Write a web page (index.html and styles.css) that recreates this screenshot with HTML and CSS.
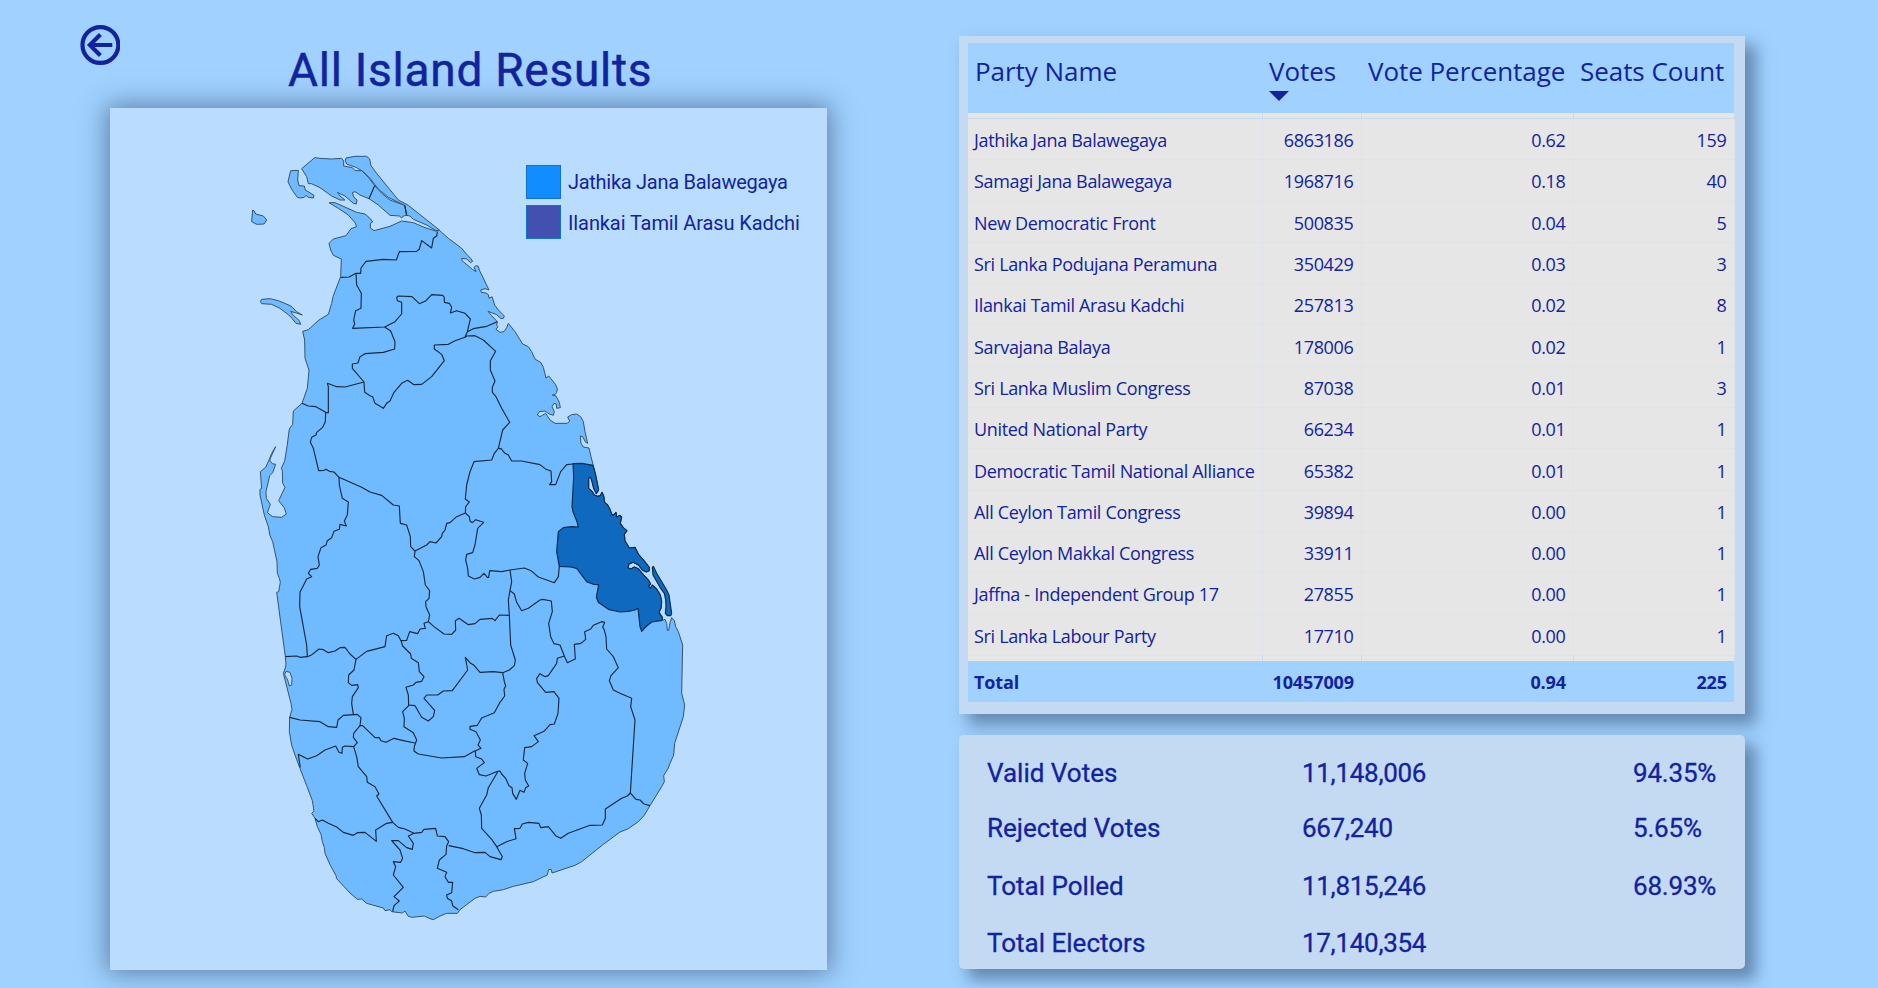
FILE: index.html
```html
<!DOCTYPE html>
<html lang="en">
<head>
<meta charset="utf-8">
<title>All Island Results</title>
<link rel="stylesheet" href="styles.css">
</head>
<body>
<main class="dashboard">
  <section class="left">
    <header class="heading">
      <a class="back" href="#" aria-label="Back">
        <svg viewBox="0 0 40 40" width="40" height="40"><circle cx="20.4" cy="20" r="17.9"/><path d="M32.3 20H10M20.4 9.5L9.9 20L20.4 30.5"/></svg>
      </a>
      <h1 class="title">All Island Results</h1>
    </header>
    <div class="map-panel">
      <svg class="map" viewBox="-390 -96 2151 2586">
        <g class="land">
          <path d="M598 271L625 295 664 324 680 343 692 355 698 364 692 368 680 357 665 355 666 362 684 377 697 388 708 395 702 382 708 377 715 379 718 390 747 450 735 446 722 450 724 457 738 459 745 464 747 475 756 470 764 495 775 510 793 528 790 535 783 536 770 524 744 514 754 526 772 545 770 555 774 560 768 568 780 577 792 575 800 563 805 550 825 575 848 612 865 620 875 635 885 657 903 668 910 682 918 714 926 708 932 715 947 734 952 747 950 757 945 764 937 765 948 768 958 787 961 803 950 805 949 792 942 790 936 800 943 815 940 826 928 822 915 813 898 815 892 825 900 830 917 820 930 840 945 850 982 850 989 843 983 831 995 824 1010 822 1022 830 1030 845 1035 875 1043 910 1037 907 1028 890 1021 888 1023 910 1030 921 1047 924 1053 950 1060 977 1067 1005 1076 1050 1069 1061 1061 1045 1056 1025 1052 1012 1046 1014 1046 1045 1057 1055 1063 1065 1073 1069 1081 1067 1086 1057 1091 1067 1094 1087 1103 1095 1110 1108 1117 1126 1124 1122 1128 1117 1130 1131 1140 1126 1145 1131 1141 1150 1150 1163 1161 1172 1153 1183 1155 1202 1168 1224 1185 1222 1195 1242 1212 1262 1228 1282 1228 1292 1219 1296 1207 1290 1195 1275 1180 1267 1167 1272 1164 1283 1172 1287 1183 1281 1195 1286 1210 1304 1225 1320 1232 1332 1226 1338 1231 1345 1237 1335 1250 1347 1261 1365 1265 1385 1263 1405 1257 1417 1267 1432 1266 1441 1275 1438 1280 1450 1282 1471 1286 1471 1290 1448 1295 1433 1303 1442 1307 1460 1315 1475 1328 1515 1325 1660 1334 1695 1330 1730 1304 1810 1301 1845 1290 1870 1285 1884 1271 1907 1273 1925 1265 1940 1230 1997 1212 2027 1195 2045 1165 2066 1140 2076 1090 2113 1025 2165 1005 2176 936 2199 934 2189 926 2188 922 2205 905 2213 880 2225 820 2239 790 2249 760 2254 747 2260 737 2271 720 2269 705 2275 660 2309 652 2320 620 2320 600 2328 580 2339 570 2336 553 2328 515 2332 504 2328 495 2313 487 2319 455 2315 450 2309 435 2312 430 2304 380 2290 365 2277 352 2278 330 2259 290 2216 288 2207 270 2174 255 2140 253 2122 247 2105 243 2083 232 2060 225 2035 215 2020 222 2014 217 1982 200 1937 180 1885 165 1845 155 1815 148 1775 149 1732 156 1708 153 1690 130 1600 134 1590 138 1575 136 1550 110 1357 116 1355 121 1327 118 1315 112 1300 111 1265 98 1205 90 1187 85 1160 73 1125 60 1065 60 1048 65 1045 61 995 77 982 88 958 95 940 107 920 90 957 90 963 97 971 107 973 98 998 89 1007 78 1055 79 1075 91 1093 82 1118 98 1130 125 1132 139 1122 132 1102 116 1082 135 1042 128 1030 127 992 124 985 134 963 141 920 148 867 158 853 160 813 186 790 202 745 207 690 195 655 194 600 188 574 205 569 237 540 265 523 275 490 279 470 298 420 302 410 304 357 280 346 272 330 267 310 280 297 318 287 333 266 350 260 345 248 325 225 295 205 267 188 285 188 330 208 350 217 375 222 390 235 398 246 391 250 391 264 402 272 450 259 485 243 520 248 555 263 590 274Z"/>
          <path d="M316 62L318 54 345 49 380 49 389 57 393 77 410 100 475 180 505 196 598 270 588 272 560 255 520 238 510 228 500 226 494 196 445 172 415 147 390 115 370 95 350 83 320 72Z"/>
          <path d="M185 86L198 75 224 53 240 55 275 57 305 55 311 63 311 78 337 83 345 92 365 92 385 112 404 137 425 160 450 180 494 196 500 226 490 228 485 234 478 228 450 226 415 195 387 176 360 165 345 155 337 158 342 172 351 180 349 192 340 190 315 168 292 157 300 168 315 180 300 180 275 168 240 143 214 131 205 131 200 110Z"/>
          <path d="M152 92L175 91 173 120 177 137 193 138 196 150 222 166 220 174 205 172 198 166 193 172 180 174 172 172 155 148 144 125Z"/>
          <path d="M38 210L43 213 47 222 70 228 80 240 72 252 50 253 35 245Z"/>
          <path d="M61 484L65 478 90 476 115 482 153 498 170 515 187 525 172 520 152 514 160 526 178 542 182 553 168 550 150 528 120 505 95 493 65 491Z"/>
        </g>
        <path class="lagoon" d="M138 1594L150 1597 156 1615 155 1635 148 1638 143 1620 134 1604Z"/>
        <g class="borders">
          <path d="M404 137L387 176M494 196L500 226"/>
          <path d="M302 412L327 411 348 400 362 400 363 384 378 364 430 358 469 360 478 335 530 334 538 327 545 302 575 324 580 295 590 288 592 276"/>
          <path d="M348 400L350 435 364 460 363 505 347 512 341 540 344 552 338 565 434 561 465 545 485 522 485 487 472 482 470 472 475 468 516 470 538 491 558 482 575 464 608 466 613 472 613 487 628 490 635 502 631 519 650 512 675 520 691 537 682 575 675 592"/>
          <path d="M772 545L740 559 700 566 682 575"/>
          <path d="M434 561L452 573 465 605 464 627 430 637 375 641 360 650 354 669 337 672 337 685 372 726 374 757 390 767 398 770 405 790 430 805 440 790 450 783 462 757 485 730 503 721 522 734 545 733 575 710 613 662 605 643 583 627 583 615 625 613 645 602 675 592 680 588 705 587 730 600 767 634 751 662 751 690 765 723 757 742 757 757 768 770 785 805 809 847 788 870 775 925"/>
          <path d="M372 726L315 741 290 740 262 730 265 740 265 818 257 817M186 790L205 798 228 800 257 817 256 845 248 862 230 877 228 885 215 892 211 907 220 925 236 992 252 991 258 988 268 994 282 996 297 1012 365 1042 390 1056 425 1066 460 1095 478 1098 481 1150 500 1155 511 1190 512 1220 525 1233"/>
          <path d="M525 1233L523 1250 537 1262 550 1295 556 1335 569 1352 567 1375 557 1385 558 1400 569 1425 565 1445"/>
          <path d="M525 1233L560 1215 570 1205 588 1209 605 1190 607 1180 615 1170 620 1150 630 1148 650 1130 676 1119 677 1100 688 1086 676 1077 680 1035 690 995 702 965 755 960 763 940 775 925"/>
          <path d="M676 1119L688 1130 690 1143 697 1148 707 1139 731 1147 713 1165 705 1215 698 1238 680 1243 677 1260 683 1285 685 1308 703 1317 720 1312 732 1300 742 1312 746 1312 749 1292 785 1295 810 1290 853 1284 873 1292 895 1311 943 1328 955 1310 958 1279"/>
          <path d="M775 925L783 926 795 940 805 945 815 963 845 963 900 974 918 988 933 993 935 1025 929 1034 947 1034 962 995 980 974 999 972"/>
          <path d="M297 1012L298 1035 307 1075 325 1086 322 1125 313 1143 319 1158 300 1153 298 1168 282 1174 275 1193 262 1202 258 1215 243 1223 234 1250 238 1275 232 1285 212 1288 205 1300 215 1310 200 1317 180 1357 179 1400 200 1515 202 1550"/>
          <path d="M136 1550L170 1548 180 1552 202 1550 213 1546 237 1527 250 1529 265 1538 285 1533 300 1523 315 1522 330 1542 348 1558 380 1534 435 1520 440 1487 460 1480 475 1487 483 1502 500 1501 509 1475 533 1481 540 1467 556 1465 552 1450 565 1445 582 1460 612 1482 635 1483 647 1470 646 1442 657 1435 685 1454 705 1451 720 1438 757 1435 765 1442 778 1425 808 1426"/>
          <path d="M810 1290L815 1325 810 1352 805 1380 808 1426 812 1515 826 1560 823 1577 808 1590 788 1598"/>
          <path d="M810 1352L823 1362 830 1387 845 1412 865 1405 900 1380 908 1378 934 1383 937 1415 926 1450 932 1490 942 1511 960 1515 973 1548 982 1568 1006 1557 1003 1513 1023 1510 1037 1498 1034 1475 1052 1467 1060 1456 1085 1445 1094 1447 1088 1462 1092 1467 1098 1490 1100 1527 1120 1550 1135 1583 1113 1607 1108 1622 1120 1650 1140 1660 1175 1675 1172 1700 1185 1740 1171 1959"/>
          <path d="M973 1548L952 1555 950 1570 925 1607 915 1610 900 1601 890 1615 892 1627 917 1657 942 1655 957 1675 954 1720 943 1752 930 1754 912 1774 882 1787 895 1805 875 1820 854 1823 850 1860 863 1870 854 1900 856 1920 866 1938 857 1943 852 1957 840 1951 829 1978 818 1960 816 1943 807 1937 797 1915 785 1902 780 1893 773 1894 738 1908 718 1904 710 1885 733 1868 725 1857 707 1850 706 1833 723 1825 714 1815 721 1800 708 1775 690 1768 690 1759 712 1756 725 1734 763 1718 780 1687 794 1668 792 1648 797 1638 793 1625 788 1598"/>
          <path d="M788 1598L760 1595 720 1597 702 1576 692 1570 676 1552 683 1590 637 1652 610 1653 593 1665 560 1665 552 1675 584 1711 580 1730 565 1743 545 1732 525 1697 506 1695"/>
          <path d="M483 1502L488 1518 512 1542 514 1555 535 1568 538 1595 552 1610 545 1624 528 1627 520 1635 498 1642 505 1665 506 1697 488 1715 493 1735 492 1760 520 1778 530 1800 523 1820 522 1833 535 1842 605 1854 673 1850 705 1832"/>
          <path d="M348 1558L342 1590 326 1605 325 1628 335 1636 353 1634 355 1643 337 1670 335 1690 340 1723"/>
          <path d="M149 1732L180 1740 240 1745 265 1760 290 1762 294 1740 310 1726 352 1723 363 1733 360 1757 341 1780 340 1792 352 1808 341 1820 315 1818 307 1822 306 1840 297 1837 287 1818 255 1830 230 1847 203 1857 175 1843 176 1852 181 1882"/>
          <path d="M360 1757L368 1757 405 1793 418 1793 423 1802 438 1807 462 1795 490 1802 525 1809"/>
          <path d="M341 1820L350 1850 355 1880 380 1910 382 1927 405 1940 417 1962 410 1968 458 2047 475 2062 495 2067 522 2080 545 2077 552 2068 587 2065 592 2088 615 2090 626 2105 620 2117 618 2143 598 2160 592 2185 620 2197 615 2210 625 2227 638 2227 635 2258 620 2265 622 2275 635 2283 638 2297 655 2309"/>
          <path d="M225 2035L235 2045 247 2040 265 2050 290 2061 310 2077 340 2086 352 2078 375 2077 409 2104 407 2070 440 2050 458 2047"/>
          <path d="M522 2080L505 2088 520 2110 517 2128 500 2123 475 2102 455 2102 480 2130 488 2155 482 2167 460 2165 467 2180 460 2205 490 2242 462 2270 478 2283 462 2297 458 2315"/>
          <path d="M626 2117L670 2126 705 2138 735 2137 750 2150 783 2159 787 2150 770 2120 755 2098 725 2065 724 2025 718 2005 740 1965 745 1943 773 1896"/>
          <path d="M770 2120L800 2105 828 2096 823 2066 840 2065 847 2052 865 2047 897 2050 902 2063 925 2060 947 2087 962 2095 985 2080 1050 2056 1087 2055 1096 2035 1096 2007 1145 1975 1162 1968 1171 1959 1188 1978 1200 1980 1212 1992 1230 1997"/>
        </g>
        <g class="selected">
          <path d="M999 971L1025 970 1059 976 1067 1005 1076 1050 1069 1061 1061 1045 1056 1025 1052 1012 1046 1014 1046 1045 1057 1055 1063 1065 1073 1069 1081 1067 1086 1057 1091 1067 1094 1087 1103 1095 1110 1108 1117 1126 1124 1122 1128 1117 1130 1131 1140 1126 1145 1131 1141 1150 1150 1163 1161 1172 1153 1183 1155 1202 1168 1224 1185 1222 1195 1242 1212 1262 1228 1282 1228 1292 1219 1296 1207 1290 1195 1275 1180 1267 1167 1272 1164 1283 1172 1287 1183 1281 1195 1286 1210 1304 1225 1320 1232 1332 1226 1338 1231 1345 1237 1335 1250 1347 1261 1365 1265 1385 1263 1405 1257 1417 1267 1432 1266 1441 1235 1446 1220 1458 1205 1474 1200 1460 1194 1405 1185 1410 1165 1414 1140 1416 1105 1408 1075 1387 1069 1372 1076 1334 1060 1333 1040 1325 1010 1285 992 1281 958 1279 950 1235 955 1175 970 1163 995 1160 1015 1161 1010 1142 999 1115 996 1100 1001 1010Z"/>
          <path d="M1240 1279L1250 1300 1280 1350 1287 1365 1295 1420 1292 1427 1282 1427 1276 1420 1278 1400 1277 1380 1273 1360 1260 1342 1239 1305 1237 1282Z"/>
        </g>
      </svg>
      <ul class="legend">
        <li><span class="swatch swatch-blue"></span><span class="legend-a">Jathika Jana Balawegaya</span></li>
        <li><span class="swatch swatch-violet"></span><span class="legend-b">Ilankai Tamil Arasu Kadchi</span></li>
      </ul>
    </div>
  </section>

  <section class="right">
    <div class="table-panel">
      <table class="results">
        <colgroup><col class="c1"><col class="c2"><col class="c3"><col class="c4"></colgroup>
        <thead><tr><th>Party Name</th><th>Votes<svg class="sort" viewBox="0 0 20 10"><path d="M0 0H20L10 10Z"/></svg></th><th>Vote Percentage</th><th>Seats Count</th></tr></thead>
        <tbody>
          <tr class="spacer"><td></td><td></td><td></td><td></td></tr>
          <tr><td>Jathika Jana Balawegaya</td><td>6863186</td><td>0.62</td><td>159</td></tr>
          <tr><td>Samagi Jana Balawegaya</td><td>1968716</td><td>0.18</td><td>40</td></tr>
          <tr><td>New Democratic Front</td><td>500835</td><td>0.04</td><td>5</td></tr>
          <tr><td>Sri Lanka Podujana Peramuna</td><td>350429</td><td>0.03</td><td>3</td></tr>
          <tr><td>Ilankai Tamil Arasu Kadchi</td><td>257813</td><td>0.02</td><td>8</td></tr>
          <tr><td>Sarvajana Balaya</td><td>178006</td><td>0.02</td><td>1</td></tr>
          <tr><td>Sri Lanka Muslim Congress</td><td>87038</td><td>0.01</td><td>3</td></tr>
          <tr><td>United National Party</td><td>66234</td><td>0.01</td><td>1</td></tr>
          <tr><td>Democratic Tamil National Alliance</td><td>65382</td><td>0.01</td><td>1</td></tr>
          <tr><td>All Ceylon Tamil Congress</td><td>39894</td><td>0.00</td><td>1</td></tr>
          <tr><td>All Ceylon Makkal Congress</td><td>33911</td><td>0.00</td><td>1</td></tr>
          <tr><td>Jaffna - Independent Group 17</td><td>27855</td><td>0.00</td><td>1</td></tr>
          <tr><td>Sri Lanka Labour Party</td><td>17710</td><td>0.00</td><td>1</td></tr>
          <tr class="spacer"><td></td><td></td><td></td><td></td></tr>
        </tbody>
        <tfoot><tr><td>Total</td><td>10457009</td><td>0.94</td><td>225</td></tr></tfoot>
      </table>
    </div>
    <div class="summary">
      <span>Valid Votes</span><span class="num">11,148,006</span><span class="pct">94.35%</span>
      <span>Rejected Votes</span><span class="num">667,240</span><span class="pct">5.65%</span>
      <span>Total Polled</span><span class="num">11,815,246</span><span class="pct">68.93%</span>
      <span>Total Electors</span><span class="num">17,140,354</span><span class="pct"></span>
    </div>
  </section>
</main>
</body>
</html>
```
FILE: styles.css
```css
* { box-sizing: border-box; }
body { margin: 0; background: #a0d1ff; color: #12239e; overflow: hidden; }
.dashboard {
  display: grid;
  grid-template-columns: 717px 786px;
  column-gap: 132px;
  width: 1878px;
  height: 988px;
  padding-left: 110px;
}
.heading { display: flex; height: 108px; }
.back { width: 40px; height: 40px; margin: 25px 0 0 -30px; }
.back svg { display: block; fill: none; stroke: #12239e; stroke-width: 4.2; }
.title {
  margin: 41px 0 0 168px;
  font: 400 46px/58px Roboto, sans-serif;
  letter-spacing: 0.75px;
  -webkit-text-stroke: 0.5px #12239e;
  white-space: nowrap;
}
.map-panel {
  display: grid;
  height: 862px;
  background: #baddff;
  box-shadow: 0 0 24px 3px rgba(60, 90, 125, .68);
}
.map-panel > * { grid-area: 1 / 1; }
.map { display: block; width: 717px; height: 862px; }
.land path { fill: #70baff; stroke: #34546f; stroke-width: 3; stroke-linejoin: round; }
.lagoon { fill: #baddff; stroke: #34546f; stroke-width: 3; }
.borders path { fill: none; stroke: #17283a; stroke-width: 3.4; stroke-linejoin: round; }
.selected path { fill: #0e69bf; stroke: #08294a; stroke-width: 3.4; stroke-linejoin: round; }
.legend {
  justify-self: end;
  align-self: start;
  width: 301px;
  margin: 57px 0 0;
  padding: 0;
  list-style: none;
  font: 20px/34px Roboto, sans-serif;
  z-index: 1;
}
.legend li { display: flex; gap: 7px; margin-bottom: 6px; white-space: nowrap; }
.legend-a { letter-spacing: -0.28px; }
.legend-b { padding-top: 1px; letter-spacing: -0.1px; }
.swatch { width: 35px; height: 34px; border: 1px solid #1071ce; }
.swatch-blue { background: #118dff; }
.swatch-violet { background: #4350af; }

.right { display: flex; flex-direction: column; gap: 21px; padding-top: 36px; }
.table-panel {
  height: 678px;
  padding: 7px 11px 12px 9px;
  background: #c4daf2;
  box-shadow: 10px 10px 15px 1px rgba(60, 90, 125, .6);
}
.results {
  width: 766px;
  table-layout: fixed;
  border-collapse: collapse;
  font: 18px/24px "Open Sans", sans-serif;
  letter-spacing: -0.33px;
}
.c1 { width: 294px; }
.c2 { width: 99px; }
.c3 { width: 212px; }
.c4 { width: 161px; }
.results th {
  height: 70px;
  padding: 10px 0 0 7px;
  background: #a0d1ff;
  text-align: left;
  vertical-align: top;
  font: 26px/36px "Open Sans", sans-serif;
  letter-spacing: -0.05px;
  white-space: nowrap;
}
.results td { height: 41.3px; padding: 2px 7px 0; text-align: right; white-space: nowrap; }
.results td:first-child { padding-left: 6px; text-align: left; }
.results tbody td { background: #e6e6e6; border-bottom: 1px solid #dfe3e8; border-right: 1px solid #dfe3ea; }
.results tbody .spacer td { height: 5.5px; padding: 0; border-color: #c6dbee; line-height: 0; }
.results tbody .spacer:last-child td { border-top: 1px solid #c6dbee; border-bottom: 0; }
.results tfoot td { height: 41px; background: #a0d1ff; font-weight: 700; letter-spacing: -0.1px; }
.sort { display: block; width: 20px; height: 10px; margin: 2px 0 0; fill: #12239e; }
.summary {
  display: grid;
  grid-template-columns: 315px 331px 1fr;
  grid-template-rows: 55px 58px 57px 55px;
  height: 234px;
  padding: 11px 0 0 28px;
  border-radius: 5px;
  background: #c4daf2;
  box-shadow: 10px 10px 15px 1px rgba(60, 90, 125, .6);
  font: 26px/55px Roboto, sans-serif;
  -webkit-text-stroke: 0.3px #12239e;
}
.num { letter-spacing: -0.3px; }
.pct { letter-spacing: -0.2px; }
```
